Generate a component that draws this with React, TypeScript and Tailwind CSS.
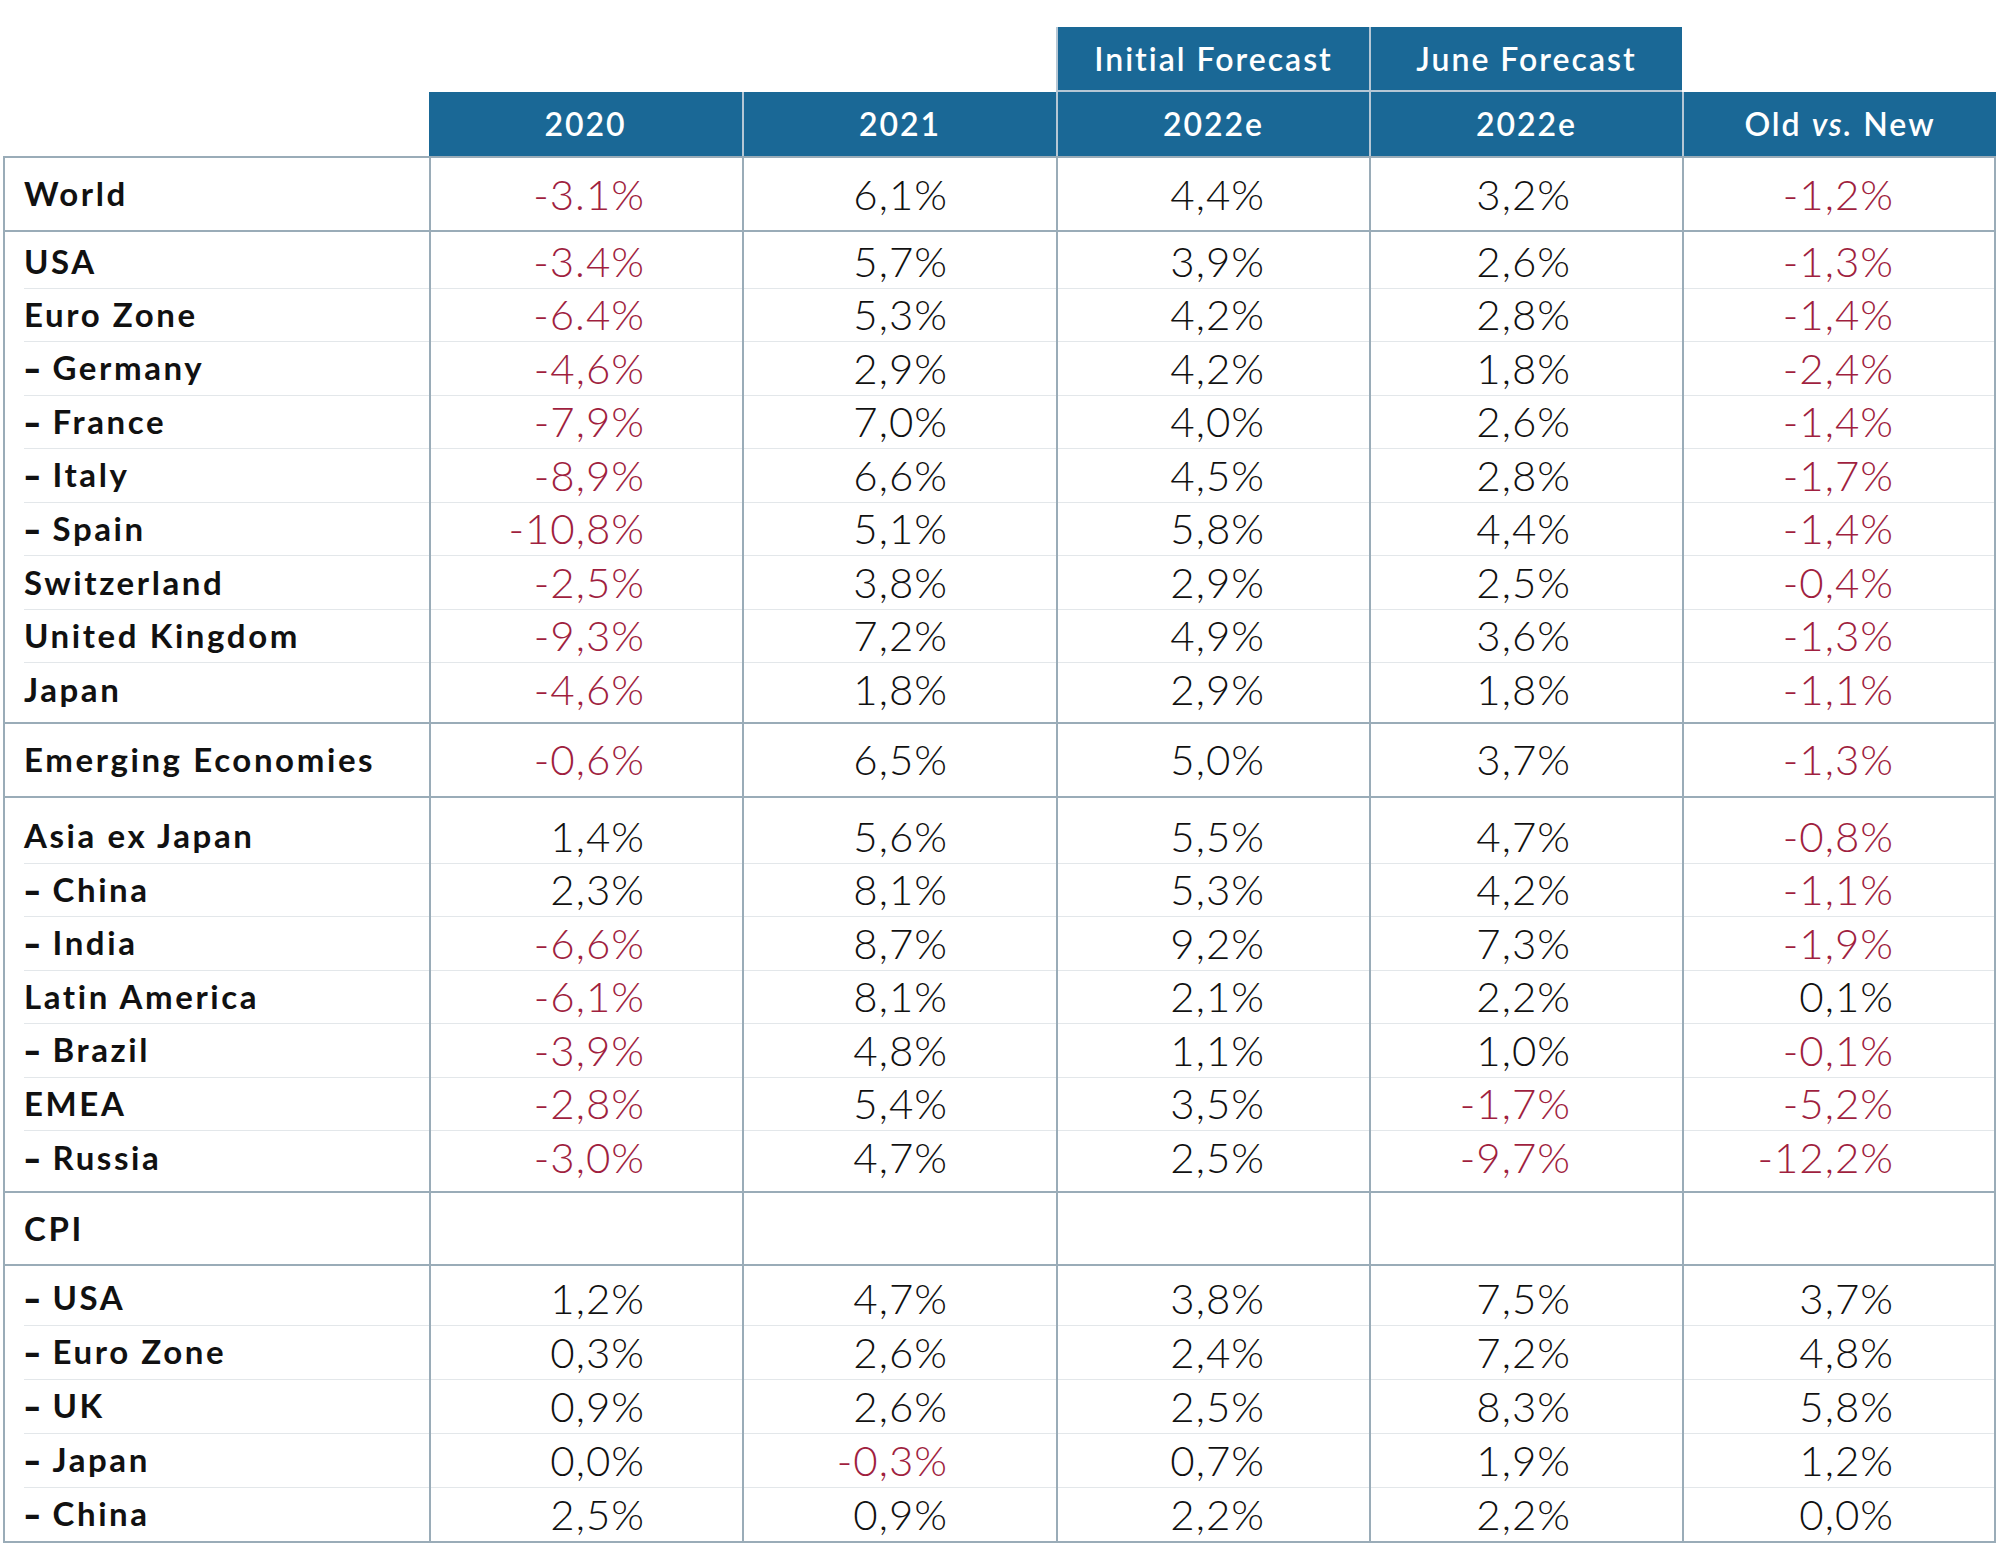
import * as React from "react"

type Row = { label: string; values: string[] }

type Group = {
  rows: Row[]
  first: string
  last: string
  mid: string
}

const COLS = "grid grid-cols-[426px_313px_314px_313px_313px_314px]"
const PR = ["pr-[97px]", "pr-[108px]", "pr-[104px]", "pr-[111px]", "pr-[100px]"]

const groups: Group[] = [
  {
    first: "h-[72px]",
    mid: "h-[72px]",
    last: "h-[72px]",
    rows: [{ label: "World", values: ["-3.1%", "6,1%", "4,4%", "3,2%", "-1,2%"] }],
  },
  {
    first: "h-[56.5px] pt-[3px]",
    mid: "h-[53.5px]",
    last: "h-[58.5px] pb-[5px]",
    rows: [
      { label: "USA", values: ["-3.4%", "5,7%", "3,9%", "2,6%", "-1,3%"] },
      { label: "Euro Zone", values: ["-6.4%", "5,3%", "4,2%", "2,8%", "-1,4%"] },
      { label: "– Germany", values: ["-4,6%", "2,9%", "4,2%", "1,8%", "-2,4%"] },
      { label: "– France", values: ["-7,9%", "7,0%", "4,0%", "2,6%", "-1,4%"] },
      { label: "– Italy", values: ["-8,9%", "6,6%", "4,5%", "2,8%", "-1,7%"] },
      { label: "– Spain", values: ["-10,8%", "5,1%", "5,8%", "4,4%", "-1,4%"] },
      { label: "Switzerland", values: ["-2,5%", "3,8%", "2,9%", "2,5%", "-0,4%"] },
      { label: "United Kingdom", values: ["-9,3%", "7,2%", "4,9%", "3,6%", "-1,3%"] },
      { label: "Japan", values: ["-4,6%", "1,8%", "2,9%", "1,8%", "-1,1%"] },
    ],
  },
  {
    first: "h-[72px]",
    mid: "h-[72px]",
    last: "h-[72px]",
    rows: [{ label: "Emerging Economies", values: ["-0,6%", "6,5%", "5,0%", "3,7%", "-1,3%"] }],
  },
  {
    first: "h-[66px] pt-[12px]",
    mid: "h-[53.5px]",
    last: "h-[60px] pb-[6.5px]",
    rows: [
      { label: "Asia ex Japan", values: ["1,4%", "5,6%", "5,5%", "4,7%", "-0,8%"] },
      { label: "– China", values: ["2,3%", "8,1%", "5,3%", "4,2%", "-1,1%"] },
      { label: "– India", values: ["-6,6%", "8,7%", "9,2%", "7,3%", "-1,9%"] },
      { label: "Latin America", values: ["-6,1%", "8,1%", "2,1%", "2,2%", "0,1%"] },
      { label: "– Brazil", values: ["-3,9%", "4,8%", "1,1%", "1,0%", "-0,1%"] },
      { label: "EMEA", values: ["-2,8%", "5,4%", "3,5%", "-1,7%", "-5,2%"] },
      { label: "– Russia", values: ["-3,0%", "4,7%", "2,5%", "-9,7%", "-12,2%"] },
    ],
  },
  {
    first: "h-[71px]",
    mid: "h-[71px]",
    last: "h-[71px]",
    rows: [{ label: "CPI", values: ["", "", "", "", ""] }],
  },
  {
    first: "h-[60px] pt-[6px]",
    mid: "h-[54px]",
    last: "h-[53px]",
    rows: [
      { label: "– USA", values: ["1,2%", "4,7%", "3,8%", "7,5%", "3,7%"] },
      { label: "– Euro Zone", values: ["0,3%", "2,6%", "2,4%", "7,2%", "4,8%"] },
      { label: "– UK", values: ["0,9%", "2,6%", "2,5%", "8,3%", "5,8%"] },
      { label: "– Japan", values: ["0,0%", "-0,3%", "0,7%", "1,9%", "1,2%"] },
      { label: "– China", values: ["2,5%", "0,9%", "2,2%", "2,2%", "0,0%"] },
    ],
  },
]

// sub-rows start with an en dash; give it a heavier face like the original
function Label({ text }: { text: string }) {
  if (!text.startsWith("– ")) return <>{text}</>
  return (
    <>
      <span className="font-['DejaVu_Sans',sans-serif] tracking-[0px] mr-[12px]">–</span>
      {text.slice(2)}
    </>
  )
}

function TableRow({ row, size, divider }: { row: Row; size: string; divider: boolean }) {
  const line = divider ? "border-b border-[#e3e7ea]" : ""
  return (
    <div className={COLS}>
      <div className={`${size} border-l-2 border-[#9aacb8] pl-[19px]`}>
        <div className={`h-full flex items-center ${line} text-[33px] font-bold text-[#111] tracking-[2.6px]`}>
          <span>
            <Label text={row.label} />
          </span>
        </div>
      </div>
      {row.values.map((v, i) => (
        <div
          key={i}
          className={`${size} border-l-2 border-[#9aacb8] ${i === 4 ? "border-r-2" : ""}`}
        >
          <div
            className={`h-full flex items-center justify-end ${PR[i]} ${line} text-[42px] font-light tracking-[1px] ${
              v.startsWith("-") ? "text-[#a01f3f]" : "text-[#111]"
            }`}
          >
            {v}
          </div>
        </div>
      ))}
    </div>
  )
}

function TableGroup({ group, isLast }: { group: Group; isLast: boolean }) {
  const n = group.rows.length
  return (
    <div className={`border-t-2 border-[#9aacb8] ${isLast ? "border-b-2" : ""}`}>
      {group.rows.map((row, i) => {
        let size = group.mid
        if (i === 0) size = group.first
        else if (i === n - 1) size = group.last
        return <TableRow key={row.label + i} row={row} size={size} divider={i < n - 1} />
      })}
    </div>
  )
}

const headCell =
  "bg-[#1a6896] flex items-center justify-center text-white text-[32px] font-semibold tracking-[2px]"

export default function App() {
  return (
    <div className="bg-white min-h-[1564px] font-['Lato',sans-serif]">
      <div className="ml-[3px] w-[1993px] pt-[27px]">
        {/* forecast labels */}
        <div className={`${COLS} h-[65px]`}>
          <div />
          <div />
          <div />
          <div className={`${headCell} border-l-2 border-b-2 border-[#b5c7d5]`}>Initial Forecast</div>
          <div className={`${headCell} border-l-2 border-b-2 border-[#b5c7d5]`}>June Forecast</div>
          <div />
        </div>

        {/* years */}
        <div className={`${COLS} h-[64px]`}>
          <div />
          <div className={headCell}>2020</div>
          <div className={`${headCell} border-l-2 border-[#b5c7d5]`}>2021</div>
          <div className={`${headCell} border-l-2 border-[#b5c7d5]`}>2022e</div>
          <div className={`${headCell} border-l-2 border-[#b5c7d5]`}>2022e</div>
          <div className={`${headCell} border-l-2 border-[#b5c7d5]`}>
            Old&nbsp;<span className="italic">vs.</span>&nbsp;New
          </div>
        </div>

        {groups.map((g, i) => (
          <TableGroup key={i} group={g} isLast={i === groups.length - 1} />
        ))}
      </div>
    </div>
  )
}
